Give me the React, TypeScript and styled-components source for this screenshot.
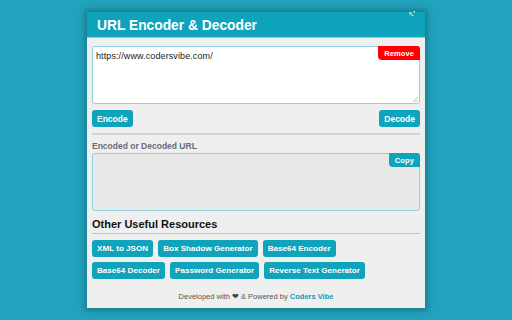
import React from "react";
import styled, { createGlobalStyle } from "styled-components";

const Global = createGlobalStyle`
  html, body { margin: 0; padding: 0; }
  body {
    width: 512px; height: 320px; overflow: hidden;
    background: #22a2bc;
    font-family: "Liberation Sans", Arial, sans-serif;
  }
`;

const Stage = styled.div`
  width: 512px;
  height: 320px;
  padding: 12px 0 0 87px;
  box-sizing: border-box;
`;

const Popup = styled.div`
  position: relative;
  width: 338px;
  height: 296px;
  background: #efefef;
  box-shadow: 0 0 6px 2px rgba(10, 80, 95, 0.55);
  display: flex;
  flex-direction: column;
`;

const Header = styled.div`
  height: 26px;
  background: #0fa2bb;
  border-bottom: 1px solid #7fd0de;
  box-sizing: border-box;
  display: flex;
  align-items: center;
  padding: 1px 0 0 10px;
  color: #fff;
  font-weight: bold;
  font-size: 13.8px;
`;

const CornerIcon = styled.svg`
  position: absolute;
  top: -1px;
  right: 9px;
`;

const Body = styled.div`
  padding: 8px 5px 0;
  display: flex;
  flex-direction: column;
  flex: 1;
`;

const Field = styled.div<{ $bg: string }>`
  position: relative;
  height: 58px;
  box-sizing: border-box;
  border: 1px solid #8fd0dd;
  border-radius: 3px;
  background: ${(p) => p.$bg};
  padding: 4px 3px;
  font-size: 9px;
  letter-spacing: 0.1px;
  color: #222;
`;

const Corner = styled.div<{ $bg: string }>`
  position: absolute;
  top: -1px;
  right: -1px;
  height: 14px;
  padding: 0 6px;
  display: flex;
  align-items: center;
  background: ${(p) => p.$bg};
  color: #fff;
  font-weight: bold;
  font-size: 7.5px;
  border-radius: 0 3px 0 4px;
`;

const Grip = styled.svg`
  position: absolute;
  right: 1px;
  bottom: 1px;
`;

const Row = styled.div`
  display: flex;
  justify-content: space-between;
  margin-top: 6px;
`;

const Btn = styled.div<{ $fs?: number }>`
  height: 17px;
  box-sizing: border-box;
  padding: 0 5px;
  display: flex;
  align-items: center;
  background: #0fa3bc;
  color: #fff;
  font-weight: bold;
  font-size: ${(p) => p.$fs ?? 8.5}px;
  border-radius: 3px;
  white-space: nowrap;
`;

const Sep = styled.div<{ $h: number; $c: string; $mt: number }>`
  height: ${(p) => p.$h}px;
  background: ${(p) => p.$c};
  margin-top: ${(p) => p.$mt}px;
`;

const Label = styled.div`
  margin-top: 3px;
  height: 15px;
  display: flex;
  align-items: center;
  font-size: 8.5px;
  font-weight: bold;
  color: #656d78;
`;

const Title = styled.div`
  margin-top: 6px;
  height: 13px;
  display: flex;
  align-items: center;
  font-size: 11px;
  font-weight: bold;
  color: #111;
`;

const Tags = styled.div`
  display: flex;
  flex-direction: column;
  gap: 5px;
  margin-top: 6px;
`;

const TagRow = styled.div`
  display: flex;
  gap: 5px;
`;

const Footer = styled.div`
  margin-top: 13px;
  text-align: center;
  font-size: 7.5px;
  color: #555;
`;

const Brand = styled.span`
  color: #0f9ab3;
  font-weight: bold;
`;

const Heart = styled.span`
  color: #444;
`;

const tagRows = [
  ["XML to JSON", "Box Shadow Generator", "Base64 Encoder"],
  ["Base64 Decoder", "Password Generator", "Reverse Text Generator"],
];

export default function App() {
  return (
    <>
      <Global />
      <Stage>
        <Popup>
          <Header>URL Encoder &amp; Decoder</Header>
          <CornerIcon width="7" height="6" viewBox="0 0 7 6">
            <path d="M0 1h3l-1 1 3 3h-2l-2-2v2z" fill="#c8cdd0" />
            <path d="M4 0h2v2z" fill="#e8eef0" />
          </CornerIcon>
          <Body>
            <Field $bg="#fff">
              https://www.codersvibe.com/
              <Corner $bg="#ff0000">Remove</Corner>
              <Grip width="6" height="6" viewBox="0 0 6 6">
                <path d="M1 6L6 1M3.5 6L6 3.5" stroke="#aaa" strokeWidth="0.8" />
              </Grip>
            </Field>
            <Row>
              <Btn>Encode</Btn>
              <Btn>Decode</Btn>
            </Row>
            <Sep $h={2} $c="#d2d2d2" $mt={6} />
            <Label>Encoded or Decoded URL</Label>
            <Field $bg="#e8e8e8">
              <Corner $bg="#0fa3bc">Copy</Corner>
            </Field>
            <Title>Other Useful Resources</Title>
            <Sep $h={1} $c="#c4c4c4" $mt={3} />
            <Tags>
              {tagRows.map((row, i) => (
                <TagRow key={i}>
                  {row.map((t) => (
                    <Btn key={t} $fs={8.1}>
                      {t}
                    </Btn>
                  ))}
                </TagRow>
              ))}
            </Tags>
            <Footer>
              Developed with <Heart>&#10084;</Heart> &amp; Powered by{" "}
              <Brand>Coders Vibe</Brand>
            </Footer>
          </Body>
        </Popup>
      </Stage>
    </>
  );
}
